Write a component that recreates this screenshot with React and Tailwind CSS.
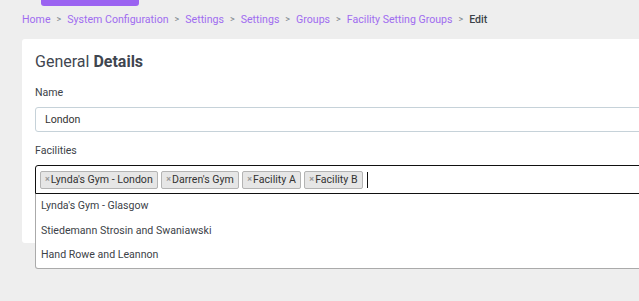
import React from "react";

const crumbs = ["Home", "System Configuration", "Settings", "Settings", "Groups", "Facility Setting Groups"];
const selected = ["Lynda's Gym - London", "Darren's Gym", "Facility A", "Facility B"];
const options = ["Lynda's Gym - Glasgow", "Stiedemann Strosin and Swaniawski", "Hand Rowe and Leannon"];

const App = () => {
    return (
        <div className="w-[639px] h-[301px] overflow-hidden bg-[#eeeeee] font-['Roboto',sans-serif] text-[#3c4248]">
            {/* top button stub */}
            <div className="ml-[41px] h-[6px] w-[98px] rounded-b-[3px] bg-[#9b63f1]" />

            {/* Breadcrumb */}
            <nav className="ml-[22px] mt-[7px] flex items-center h-[13px] text-[10.6px] leading-[13px]">
                {crumbs.map((c, i) => (
                    <React.Fragment key={i}>
                        <span className="text-[#a06cf0]">{c}</span>
                        <span className="mx-[6px] text-[9px] text-[#7d868c]">&gt;</span>
                    </React.Fragment>
                ))}
                <span className="font-medium text-[#3c4248]">Edit</span>
            </nav>

            {/* Card */}
            <div className="relative ml-[22px] mt-[13px] w-[700px] rounded-[3px] bg-white pl-[13px] pt-[13px] pb-[49px]">
                <h2 className="text-[16px] leading-[20px] text-[#3f4650]">
                    General <span className="font-bold">Details</span>
                </h2>

                <label className="mt-[14px] block text-[10.6px] leading-[14px] text-[#3c4248]">Name</label>
                <div className="mt-[7px] flex h-[25px] items-center rounded-[3px] border border-[#c6d2d9] pl-[9px] text-[10.6px] text-[#333]">
                    London
                </div>

                <label className="mt-[12px] block text-[10.6px] leading-[14px] text-[#3c4248]">Facilities</label>
                <div className="relative mt-[7px]">
                    <div className="flex h-[29px] items-center gap-[3.5px] rounded-tl-[3px] border border-[#111] pl-[4px]">
                        {selected.map((s) => (
                            <span
                                key={s}
                                className="flex h-[18px] items-center rounded-[2px] border border-[#b4b4b4] bg-[#e6e6e6] pl-[4px] pr-[4px] text-[10.6px] text-[#333]"
                            >
                                <span className="mr-[1px] text-[9px] font-bold text-[#999]">×</span>
                                {s}
                            </span>
                        ))}
                        <span className="ml-[1px] h-[16px] w-px bg-[#111]" />
                    </div>

                    {/* Dropdown */}
                    <div className="absolute left-0 top-[29px] z-10 w-full rounded-b-[3px] border border-t-0 border-[#aaaaaa] bg-white">
                        {options.map((o) => (
                            <div key={o} className="flex h-[24.5px] items-center pl-[5px] text-[10.6px] text-[#3c4248]">
                                {o}
                            </div>
                        ))}
                    </div>
                </div>
            </div>
        </div>
    );
};

export default App;
